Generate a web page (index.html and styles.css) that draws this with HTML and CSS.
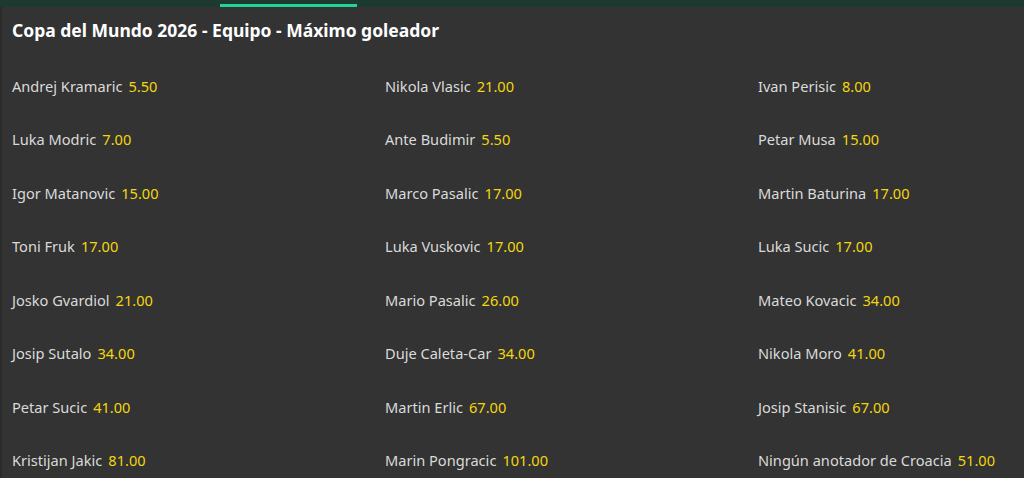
FILE: index.html
```html
<!DOCTYPE html>
<html>
<head>
  <title>Máximo goleador</title>
  <link rel="stylesheet" href="styles.css">
</head>
<body>
  <div class="topbar">
    <div class="tab-line"></div>
  </div>

  <div class="market">
    <h2 class="market-title">Copa del Mundo 2026 - Equipo - Máximo goleador</h2>

    <div class="odds-grid">
      <div class="sel"><span class="name">Andrej Kramaric</span><span class="price">5.50</span></div>
      <div class="sel"><span class="name">Nikola Vlasic</span><span class="price">21.00</span></div>
      <div class="sel"><span class="name">Ivan Perisic</span><span class="price">8.00</span></div>

      <div class="sel"><span class="name">Luka Modric</span><span class="price">7.00</span></div>
      <div class="sel"><span class="name">Ante Budimir</span><span class="price">5.50</span></div>
      <div class="sel"><span class="name">Petar Musa</span><span class="price">15.00</span></div>

      <div class="sel"><span class="name">Igor Matanovic</span><span class="price">15.00</span></div>
      <div class="sel"><span class="name">Marco Pasalic</span><span class="price">17.00</span></div>
      <div class="sel"><span class="name">Martin Baturina</span><span class="price">17.00</span></div>

      <div class="sel"><span class="name">Toni Fruk</span><span class="price">17.00</span></div>
      <div class="sel"><span class="name">Luka Vuskovic</span><span class="price">17.00</span></div>
      <div class="sel"><span class="name">Luka Sucic</span><span class="price">17.00</span></div>

      <div class="sel"><span class="name">Josko Gvardiol</span><span class="price">21.00</span></div>
      <div class="sel"><span class="name">Mario Pasalic</span><span class="price">26.00</span></div>
      <div class="sel"><span class="name">Mateo Kovacic</span><span class="price">34.00</span></div>

      <div class="sel"><span class="name">Josip Sutalo</span><span class="price">34.00</span></div>
      <div class="sel"><span class="name">Duje Caleta-Car</span><span class="price">34.00</span></div>
      <div class="sel"><span class="name">Nikola Moro</span><span class="price">41.00</span></div>

      <div class="sel"><span class="name">Petar Sucic</span><span class="price">41.00</span></div>
      <div class="sel"><span class="name">Martin Erlic</span><span class="price">67.00</span></div>
      <div class="sel"><span class="name">Josip Stanisic</span><span class="price">67.00</span></div>

      <div class="sel"><span class="name">Kristijan Jakic</span><span class="price">81.00</span></div>
      <div class="sel"><span class="name">Marin Pongracic</span><span class="price">101.00</span></div>
      <div class="sel"><span class="name">Ningún anotador de Croacia</span><span class="price">51.00</span></div>
    </div>
  </div>
</body>
</html>
```

FILE: styles.css
```css
* { box-sizing: border-box; margin: 0; padding: 0; }

body {
  font-family: 'Noto Sans', 'Open Sans', sans-serif;
  background: #333333;
  color: #dcdcdc;
  overflow: hidden;
}

.topbar {
  height: 7px;
  background: #1c3a2f;
  position: relative;
}

.tab-line {
  position: absolute;
  left: 220px;
  bottom: 0;
  width: 137px;
  height: 3px;
  background: #25d39a;
}

.market {
  border-left: 2px solid #2b2b2b;
  padding: 11px 0 0 10px;
  min-height: 471px;
}

.market-title {
  font-size: 17.5px;
  font-weight: 700;
  line-height: 24px;
  color: #ffffff;
}

.odds-grid {
  margin-top: 17px;
  display: grid;
  grid-template-columns: 373px 373px 1fr;
  grid-auto-rows: 53.5px;
}

.sel {
  display: flex;
  align-items: center;
  gap: 6px;
  font-size: 14.6px;
}

.name {
  color: #dadada;
}

.price {
  color: #f4d60c;
}
```
